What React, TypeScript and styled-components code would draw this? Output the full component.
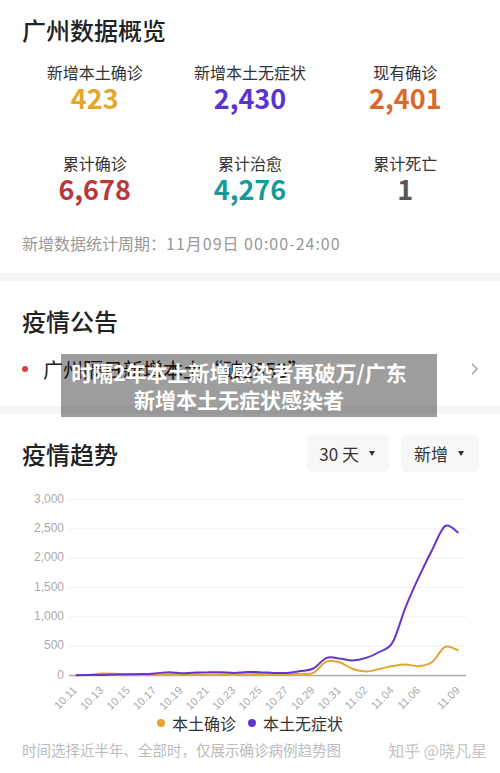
import React from "react";
import styled, { createGlobalStyle } from "styled-components";

const GlobalStyle = createGlobalStyle`
  body {
    margin: 0;
    background: #fff;
    font-family: "Noto Sans CJK SC", "Noto Sans", sans-serif;
  }
`;

const Page = styled.div`
  position: relative;
  width: 500px;
  overflow: hidden;
`;

const OverviewSection = styled.div`
  padding: 13px 0 19px;
`;

const SectionTitle = styled.div`
  font-size: 24px;
  line-height: 34px;
  font-weight: 500;
  color: #222;
  padding-left: 22px;
`;

const StatGrid = styled.div`
  display: grid;
  grid-template-columns: repeat(3, 1fr);
  row-gap: 39px;
  margin-top: 14px;
  padding: 0 17px;
`;

const Stat = styled.div`
  text-align: center;
`;

const StatLabel = styled.div`
  font-size: 16px;
  line-height: 22px;
  color: #333;
`;

const StatValue = styled.div<{ $color: string }>`
  font-size: 27px;
  line-height: 30px;
  font-weight: 700;
  color: ${(p) => p.$color};
`;

const Period = styled.div`
  margin-top: 28px;
  padding-left: 22px;
  font-size: 16px;
  line-height: 22px;
  color: #999;
`;

const PeriodTime = styled.span`
  letter-spacing: 1px;
`;

const Band = styled.div`
  height: 8px;
  background: #f5f5f5;
`;

const NoticeSection = styled.div`
  position: relative;
  padding: 23px 0 22px;
`;

const NoticeItem = styled.div`
  display: flex;
  align-items: center;
  height: 30px;
  margin-top: 16px;
  padding: 0 22px;
`;

const RedDot = styled.span`
  width: 6px;
  height: 6px;
  border-radius: 50%;
  background: #e03c3c;
  margin-right: 15px;
  flex: none;
`;

const NoticeText = styled.div`
  flex: 1;
  font-size: 20px;
  color: #222;
  white-space: nowrap;
  overflow: hidden;
`;

const Overlay = styled.div`
  position: absolute;
  left: 61px;
  top: 73px;
  width: 376px;
  height: 63px;
  box-sizing: border-box;
  padding-right: 20px;
  background: rgba(0, 0, 0, 0.38);
  display: flex;
  flex-direction: column;
  align-items: center;
  justify-content: center;
  color: #fff;
  font-size: 21px;
  line-height: 27px;
  font-weight: 700;
  white-space: nowrap;
`;

const TrendSection = styled.div`
  padding-top: 21px;
`;

const TrendHeader = styled.div`
  display: flex;
  align-items: center;
  gap: 11px;
  padding: 0 21px 0 22px;
  height: 37px;
`;

const TrendTitle = styled(SectionTitle)`
  flex: 1;
  padding-left: 0;
`;

const Dropdown = styled.div`
  height: 37px;
  padding: 0 15px 0 13px;
  box-sizing: border-box;
  background: #f7f7f7;
  border-radius: 6px;
  display: flex;
  align-items: center;
  gap: 10px;
  font-size: 17px;
  color: #333;
`;

const Caret = styled.span`
  width: 0;
  height: 0;
  border-left: 3.5px solid transparent;
  border-right: 3.5px solid transparent;
  border-top: 5px solid #333;
`;

const ChartSvg = styled.svg`
  display: block;
  margin-top: 15px;
`;

const Legend = styled.div`
  display: flex;
  justify-content: center;
  gap: 12px;
`;

const LegendItem = styled.div`
  display: flex;
  align-items: center;
  gap: 7px;
  font-size: 16px;
  line-height: 22px;
  color: #333;
`;

const LegendDot = styled.span<{ $color: string }>`
  width: 8px;
  height: 8px;
  border-radius: 50%;
  background: ${(p) => p.$color};
`;

const Footer = styled.div`
  display: flex;
  justify-content: space-between;
  align-items: center;
  margin-top: 5px;
  padding: 0 13px 0 22px;
  font-size: 14.5px;
  line-height: 22px;
  color: #bbb;
`;

const Watermark = styled.span`
  font-size: 16px;
  color: #c4c4c4;
`;

const stats = [
  { label: "新增本土确诊", value: "423", color: "#e3a72a" },
  { label: "新增本土无症状", value: "2,430", color: "#5b33cf" },
  { label: "现有确诊", value: "2,401", color: "#d9692c" },
  { label: "累计确诊", value: "6,678", color: "#b63a3b" },
  { label: "累计治愈", value: "4,276", color: "#18999a" },
  { label: "累计死亡", value: "1", color: "#555" },
];

const asymptomatic = [
  5, 8, 10, 15, 20, 25, 35, 55, 40, 50, 55, 55, 45, 60, 55, 45, 45, 75, 120,
  300, 290, 255, 300, 400, 560, 1170, 1680, 2140, 2550, 2430,
];
const confirmed = [
  2, 10, 35, 30, 15, 10, 10, 20, 20, 25, 15, 20, 25, 20, 30, 25, 20, 30, 45,
  240, 225, 110, 70, 110, 160, 185, 160, 230, 490, 423,
];

const dates = [
  "10.11", "10.12", "10.13", "10.14", "10.15", "10.16", "10.17", "10.18",
  "10.19", "10.20", "10.21", "10.22", "10.23", "10.24", "10.25", "10.26",
  "10.27", "10.28", "10.29", "10.30", "10.31", "11.01", "11.02", "11.03",
  "11.04", "11.05", "11.06", "11.07", "11.08", "11.09",
];

// chart geometry, svg top sits at page y 488
const X0 = 75.7;
const STEP = 13.2;
const Y_ZERO = 188.5;
const Y_SCALE = 176 / 3000;

const px = (i: number) => X0 + STEP * i;
const py = (v: number) => Y_ZERO - v * Y_SCALE;

function smoothPath(values: number[]) {
  const pts = values.map((v, i) => [px(i), py(v)]);
  let d = `M${pts[0][0].toFixed(1)},${pts[0][1].toFixed(1)}`;
  for (let i = 0; i < pts.length - 1; i++) {
    const p0 = pts[i - 1] || pts[i];
    const p1 = pts[i];
    const p2 = pts[i + 1];
    const p3 = pts[i + 2] || p2;
    const c1x = p1[0] + (p2[0] - p0[0]) / 6;
    const c1y = p1[1] + (p2[1] - p0[1]) / 6;
    const c2x = p2[0] - (p3[0] - p1[0]) / 6;
    const c2y = p2[1] - (p3[1] - p1[1]) / 6;
    d += ` C${c1x.toFixed(1)},${c1y.toFixed(1)} ${c2x.toFixed(1)},${c2y.toFixed(
      1
    )} ${p2[0].toFixed(1)},${p2[1].toFixed(1)}`;
  }
  return d;
}

const labelIdx = [0, 2, 4, 6, 8, 10, 12, 14, 16, 18, 20, 22, 24, 26, 29];

function TrendChart() {
  const ticks = [0, 500, 1000, 1500, 2000, 2500, 3000];
  return (
    <ChartSvg width={500} height={225} viewBox="0 0 500 225">
      {ticks.map((t) => (
        <g key={t}>
          {t > 0 && (
            <line x1={69} x2={466} y1={py(t)} y2={py(t)} stroke="#f0f0f0" strokeWidth={1} />
          )}
          <text
            x={64}
            y={py(t)}
            textAnchor="end"
            dominantBaseline="middle"
            fontSize={12}
            fill="#aaa"
            fontFamily="'Liberation Sans', sans-serif"
          >
            {t.toLocaleString("en-US")}
          </text>
        </g>
      ))}
      <line x1={69} x2={466} y1={Y_ZERO} y2={Y_ZERO} stroke="#aaa" strokeWidth={1.5} />
      <path d={smoothPath(confirmed)} fill="none" stroke="#e8a42c" strokeWidth={2} />
      <path d={smoothPath(asymptomatic)} fill="none" stroke="#6436c9" strokeWidth={2} />
      {labelIdx.map((i) => (
        <text
          key={i}
          x={px(i) + 2}
          y={204}
          textAnchor="end"
          fontSize={11}
          fill="#aaa"
          fontFamily="'Liberation Sans', sans-serif"
          transform={`rotate(-45 ${px(i) + 2} 204)`}
        >
          {dates[i]}
        </text>
      ))}
    </ChartSvg>
  );
}

export default function App() {
  return (
    <Page>
      <GlobalStyle />
      <OverviewSection>
        <SectionTitle>广州数据概览</SectionTitle>
        <StatGrid>
          {stats.map((s) => (
            <Stat key={s.label}>
              <StatLabel>{s.label}</StatLabel>
              <StatValue $color={s.color}>{s.value}</StatValue>
            </Stat>
          ))}
        </StatGrid>
        <Period>
          新增数据统计周期：<PeriodTime>11月09日 00:00-24:00</PeriodTime>
        </Period>
      </OverviewSection>
      <Band />
      <NoticeSection>
        <SectionTitle>疫情公告</SectionTitle>
        <NoticeItem>
          <RedDot />
          <NoticeText>广州隔日新增本土“破2853”</NoticeText>
          <svg width="7" height="12" viewBox="0 0 7 12">
            <path d="M1 1l5 5-5 5" fill="none" stroke="#999" strokeWidth="1.3" />
          </svg>
        </NoticeItem>
        <Overlay>
          <div>时隔2年本土新增感染者再破万/广东</div>
          <div>新增本土无症状感染者</div>
        </Overlay>
      </NoticeSection>
      <Band />
      <TrendSection>
        <TrendHeader>
          <TrendTitle>疫情趋势</TrendTitle>
          <Dropdown>
            30 天<Caret />
          </Dropdown>
          <Dropdown>
            新增<Caret />
          </Dropdown>
        </TrendHeader>
        <TrendChart />
        <Legend>
          <LegendItem>
            <LegendDot $color="#e8a42c" />
            本土确诊
          </LegendItem>
          <LegendItem>
            <LegendDot $color="#6436c9" />
            本土无症状
          </LegendItem>
        </Legend>
        <Footer>
          <span>时间选择近半年、全部时，仅展示确诊病例趋势图</span>
          <Watermark>知乎 @晓凡星</Watermark>
        </Footer>
      </TrendSection>
    </Page>
  );
}
